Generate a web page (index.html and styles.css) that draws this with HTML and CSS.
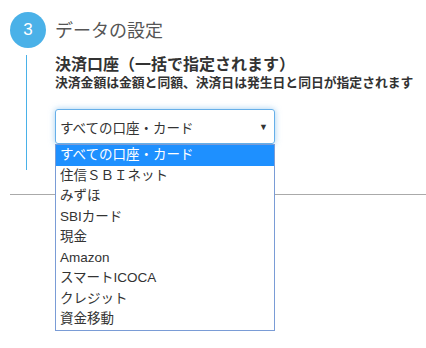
FILE: index.html
```html
<!DOCTYPE html>
<html lang="ja">
<head>
<meta charset="utf-8">
<link rel="stylesheet" href="styles.css">
</head>
<body>
<div class="step">
  <div class="step-head">
    <span class="num">3</span>
    <span class="step-title">データの設定</span>
  </div>
  <div class="step-body">
    <div class="label">決済口座（一括で指定されます）</div>
    <div class="note">決済金額は金額と同額、決済日は発生日と同日が指定されます</div>
    <div class="select-wrap">
      <div class="select">
        <span>すべての口座・カード</span>
        <span class="arrow">▼</span>
      </div>
      <ul class="menu">
        <li class="on">すべての口座・カード</li>
        <li>住信ＳＢＩネット</li>
        <li>みずほ</li>
        <li>SBIカード</li>
        <li>現金</li>
        <li>Amazon</li>
        <li>スマートICOCA</li>
        <li>クレジット</li>
        <li>資金移動</li>
      </ul>
    </div>
  </div>
</div>
<div class="rule"></div>
</body>
</html>
```
FILE: styles.css
```css
* { box-sizing: border-box; }
html, body { min-height: 348px; }
body {
  margin: 0;
  background: #fff;
  font-family: "Liberation Sans", "Noto Sans CJK JP", sans-serif;
  color: #333;
}
.step { padding-top: 12px; }
.step-head {
  display: flex;
  align-items: center;
  padding-left: 10px;
  height: 36px;
}
.num {
  width: 36px;
  height: 36px;
  border-radius: 50%;
  background: #4ab1e8;
  color: #fff;
  font-size: 17px;
  font-family: "Liberation Sans", sans-serif;
  display: flex;
  align-items: center;
  justify-content: center;
}
.step-title {
  margin-left: 9px;
  font-size: 18px;
  color: #555;
  position: relative;
  top: -1px;
}
.step-body {
  margin-left: 26px;
  margin-top: 7px;
  border-left: 1px solid #4ab1e8;
  padding-left: 28px;
  padding-bottom: 26px;
}
.label {
  font-size: 16px;
  font-weight: bold;
  line-height: 20px;
  color: #333;
}
.note {
  font-size: 12.8px;
  font-weight: bold;
  line-height: 16px;
  color: #333;
}
.select-wrap {
  position: relative;
  margin-top: 18px;
  width: 220px;
}
.select {
  height: 35px;
  border: 1px solid #66afe9;
  border-radius: 3px;
  box-shadow: 0 0 6px rgba(102, 175, 233, 0.6);
  display: flex;
  align-items: center;
  justify-content: space-between;
  padding: 0 6px 0 4px;
  font-size: 13.5px;
  color: #333;
}
.arrow { font-size: 9px; color: #333; }
.menu {
  position: absolute;
  top: 35px;
  left: 0;
  width: 220px;
  margin: 0;
  padding: 0;
  list-style: none;
  border: 1px solid #7a9cd6;
  background: #fff;
  z-index: 2;
}
.menu li {
  height: 20.5px;
  line-height: 20.5px;
  padding-left: 4px;
  font-size: 13.5px;
  color: #333;
  white-space: nowrap;
}
.menu li.on { background: #1e90ff; color: #fff; }
.rule {
  margin-left: 10px;
  margin-top: 24px;
  height: 1px;
  background: #aaa;
}
```
